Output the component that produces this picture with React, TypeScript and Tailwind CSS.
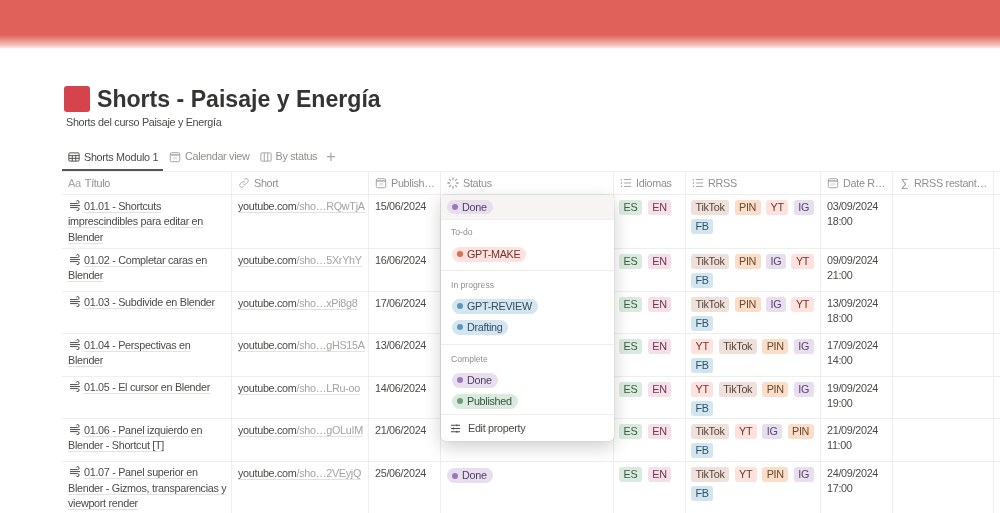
import React from "react";

const Wind = () => (
  <svg width="12" height="11" viewBox="0 0 12 11" fill="none" stroke="#4a4a4a" strokeWidth="1" className="inline-block mr-[3px] ml-[1px] align-[-1px]">
    <path d="M1 3.6h7.6a1.5 1.5 0 1 0-1.4-2.1" />
    <path d="M1 5.6h10" />
    <path d="M1 7.6h7.6a1.5 1.5 0 1 1-1.4 2.1" />
  </svg>
);

const Icon = ({ kind, color = "#a3a3a0", cls = "" }: { kind: string; color?: string; cls?: string }) => {
  const p = { width: 12, height: 12, viewBox: "0 0 14 14", fill: "none", stroke: color, strokeWidth: 1.1, className: "shrink-0 " + cls };
  if (kind === "cal")
    return (
      <svg {...p}>
        <rect x="1.5" y="2" width="11" height="10.5" rx="1.5" />
        <path d="M1.5 4.6h11" strokeWidth="1.6" />
        <rect x="4" y="7" width="6" height="3" fill={color} stroke="none" opacity=".25" />
      </svg>
    );
  if (kind === "link")
    return (
      <svg {...p}>
        <path d="M6 8a2.3 2.3 0 0 0 3.3 0l2-2a2.3 2.3 0 0 0-3.3-3.3l-.8.8" />
        <path d="M8 6a2.3 2.3 0 0 0-3.3 0l-2 2a2.3 2.3 0 0 0 3.3 3.3l.8-.8" />
      </svg>
    );
  if (kind === "list")
    return (
      <svg {...p}>
        <path d="M4.5 3h8.5M4.5 7h8.5M4.5 11h8.5" />
        <path d="M1 3h1.4M1 7h1.4M1 11h1.4" strokeWidth="1.5" />
      </svg>
    );
  if (kind === "status")
    return (
      <svg {...p} strokeWidth="1.5" strokeLinecap="round">
        <path d="M7 1v2M7 11v2M1 7h2M11 7h2M2.8 2.8l1.4 1.4M9.8 9.8l1.4 1.4M2.8 11.2l1.4-1.4M9.8 4.2l1.4-1.4" />
      </svg>
    );
  if (kind === "table")
    return (
      <svg {...p}>
        <rect x="1" y="2.2" width="12" height="9.6" rx="1.3" />
        <path d="M1 5.4h12M1 8.6h12M5 5.4v6.4M9 5.4v6.4" />
      </svg>
    );
  if (kind === "board")
    return (
      <svg {...p}>
        <rect x="1" y="2.2" width="12" height="9.6" rx="1.3" />
        <path d="M5 2.2v9.6M9 2.2v9.6" />
      </svg>
    );
  return null;
};

const tagColors: Record<string, string> = {
  ES: "bg-[#dbeadf] text-[#3d5c49]",
  EN: "bg-[#f5e0e9] text-[#6b3a52]",
  TikTok: "bg-[#eee0da] text-[#5a443a]",
  PIN: "bg-[#fadec9] text-[#6b4a2c]",
  YT: "bg-[#ffe2dd] text-[#6e3630]",
  IG: "bg-[#e8deee] text-[#54476e]",
  FB: "bg-[#d3e5ef] text-[#2f5368]",
};

const Tag = ({ t }: { t: string }) => (
  <span className={"h-[15px] leading-[15px] px-[4.5px] rounded-[3px] text-[10.8px] tracking-[-0.3px] " + tagColors[t]}>{t}</span>
);

const statusStyle: Record<string, [string, string]> = {
  Done: ["bg-[#e8deee] text-[#4e3f66]", "bg-[#9a78b8]"],
  "GPT-MAKE": ["bg-[#ffe2dd] text-[#6e3630]", "bg-[#df6b5a]"],
  "GPT-REVIEW": ["bg-[#d3e5ef] text-[#2f4f63]", "bg-[#5b97bd]"],
  Drafting: ["bg-[#d3e5ef] text-[#2f4f63]", "bg-[#5b97bd]"],
  Published: ["bg-[#dbeadf] text-[#34513f]", "bg-[#6c9b7d]"],
};

const Pill = ({ s }: { s: string }) => (
  <span className={"inline-flex items-center h-[14.5px] pl-[5px] pr-[6px] gap-[4px] rounded-full text-[10.8px] tracking-[-0.3px] leading-[15px] " + statusStyle[s][0]}>
    <span className={"w-[6px] h-[6px] rounded-full " + statusStyle[s][1]} />
    {s}
  </span>
);

const rows = [
  { title: "01.01 - Shortcuts imprescindibles para editar en Blender", end: "RQwTjA", date: "15/06/2024", r: ["TikTok", "PIN", "YT", "IG", "FB"], d: "03/09/2024", t: "18:00", h: "h-[54px]" },
  { title: "01.02 - Completar caras en Blender", end: "5XrYhY", date: "16/06/2024", r: ["TikTok", "PIN", "IG", "YT", "FB"], d: "09/09/2024", t: "21:00", h: "h-[42.5px]" },
  { title: "01.03 - Subdivide en Blender", end: "xPi8g8", date: "17/06/2024", r: ["TikTok", "PIN", "IG", "YT", "FB"], d: "13/09/2024", t: "18:00", h: "h-[42.5px]" },
  { title: "01.04 - Perspectivas en Blender", end: "gHS15A", date: "13/06/2024", r: ["YT", "TikTok", "PIN", "IG", "FB"], d: "17/09/2024", t: "14:00", h: "h-[42.5px]" },
  { title: "01.05 - El cursor en Blender", end: "LRu-oo", date: "14/06/2024", r: ["YT", "TikTok", "PIN", "IG", "FB"], d: "19/09/2024", t: "19:00", h: "h-[42.5px]" },
  { title: "01.06 - Panel izquierdo en Blender - Shortcut [T]", end: "gOLuIM", date: "21/06/2024", r: ["TikTok", "YT", "IG", "PIN", "FB"], d: "21/09/2024", t: "11:00", h: "h-[42.5px]" },
  { title: "01.07 - Panel superior en Blender - Gizmos, transparencias y viewport render", end: "2VEyjQ", date: "25/06/2024", r: ["TikTok", "YT", "PIN", "IG", "FB"], d: "24/09/2024", t: "17:00", h: "h-[54px]", done: true },
];

const cols = "grid grid-cols-[170px_137px_72px_173px_72px_135px_72px_101px_40px]";
const cell = "border-r border-[#eeeeec] px-[6px] min-w-0";

const HeadCell = ({ icon, label, sigma }: { icon?: string; label: string; sigma?: boolean }) => (
  <div className={cell + " flex items-center gap-[4px] text-[10.8px] tracking-[-0.3px] text-[#8f8f8c]"}>
    {sigma ? <span className="w-[12px] text-center text-[11px]">∑</span> : icon === "aa" ? <span className="text-[11px] text-[#a5a5a2]">Aa</span> : <Icon kind={icon!} />}
    <span className="whitespace-nowrap">{label}</span>
  </div>
);

const Row = ({ r }: { r: (typeof rows)[number] }) => (
  <div className={cols + " border-b border-[#eeeeec] overflow-hidden text-[10.8px] tracking-[-0.3px] text-[#4a4a47] " + r.h}>
    <div className={cell + " pt-[3.5px] leading-[15.5px] !pr-[4px]"}>
      <Wind />
      <span className="border-b border-[#e2e2e0]">{r.title}</span>
    </div>
    <div className={cell + " pt-[4px] leading-[15px] whitespace-nowrap"}>
      <span className="border-b border-[#e2e2e0]">
        youtube.com<span className="text-[#a3a3a0]">/sho…{r.end}</span>
      </span>
    </div>
    <div className={cell + " pt-[4px] leading-[15px]"}>{r.date}</div>
    <div className={cell + " pt-[5px]"}>{r.done && <Pill s="Done" />}</div>
    <div className={cell + " !pl-[5px] pt-[5px] flex gap-[6px] items-start"}>
      <Tag t="ES" />
      <Tag t="EN" />
    </div>
    <div className={cell + " !pl-[5px] !pr-[1px] pt-[5px] flex flex-wrap content-start gap-x-[5.5px] gap-y-[4px]"}>
      {r.r.map((t) => (
        <Tag key={t} t={t} />
      ))}
    </div>
    <div className={cell + " pt-[4px] leading-[15px]"}>
      {r.d}
      <br />
      {r.t}
    </div>
    <div className={cell} />
    <div />
  </div>
);

export default function App() {
  return (
    <div className="w-[1000px] h-[513px] overflow-hidden bg-white font-['Liberation_Sans',Arial,sans-serif] text-[#373735] blur-[0.3px]">
      <div className="h-[49px] bg-[linear-gradient(to_bottom,#e0615a_0,#e0615a_35px,#f5c9c5_46px,#ffffff_49px)]" />
      <div className="pl-[62px]">
        <div className="flex items-center h-[26px] mt-[37px] pl-[2px]">
          <div className="w-[26px] h-[26px] rounded-[3px] bg-[#d5434d] shrink-0" />
          <h1 className="ml-[7px] text-[23.1px] font-bold leading-[30px] text-[#343432]">Shorts - Paisaje y Energía</h1>
        </div>
        <p className="mt-[3px] ml-[4px] text-[10.8px] tracking-[-0.3px] leading-[15px] text-[#4a4a48]">Shorts del curso Paisaje y Energía</p>
        <div className="flex items-center h-[23px] mt-[15px] text-[10.8px] tracking-[-0.3px] text-[#8f8f8c] whitespace-nowrap">
          <div className="flex items-center gap-[4px] h-[26px] w-[101px] pl-[6px] border-b-2 border-[#55554f] text-[#4a4a48] mb-[-3px]">
            <Icon kind="table" color="#4a4a48" />
            Shorts Modulo 1
          </div>
          <div className="flex items-center gap-[4px] ml-[6px]">
            <Icon kind="cal" />
            Calendar view
          </div>
          <div className="flex items-center gap-[4px] ml-[10px]">
            <Icon kind="board" />
            By status
          </div>
          <span className="ml-[9px] text-[16px] text-[#a5a5a2] leading-[16px]">+</span>
        </div>
        <div className="relative mt-[3px] w-[978px]">
          <div className={cols + " h-[24px] border-t border-b border-[#eeeeec]"}>
            <HeadCell icon="aa" label="Título" />
            <HeadCell icon="link" label="Short" />
            <HeadCell icon="cal" label="Publish…" />
            <HeadCell icon="status" label="Status" />
            <HeadCell icon="list" label="Idiomas" />
            <HeadCell icon="list" label="RRSS" />
            <HeadCell icon="cal" label="Date R…" />
            <HeadCell sigma label="RRSS restant…" />
            <div />
          </div>
          {rows.map((r) => (
            <Row key={r.end} r={r} />
          ))}

          <div className="absolute left-[379px] top-[24px] w-[173px] h-[246px] bg-white rounded-[5px] shadow-[0_6px_18px_rgba(15,15,15,0.2),0_0_0_1px_rgba(15,15,15,0.04)] flex flex-col text-[10.8px] tracking-[-0.3px] overflow-hidden">
            <div className="h-[25px] bg-[#f6f5f3] flex items-center pl-[6px] border-b border-[#eeeeec]">
              <Pill s="Done" />
            </div>
            <div className="h-[51px] border-b border-[#eeeeec] pl-[10px] pt-[6px]">
              <div className="text-[8.6px] tracking-normal leading-[12px] text-[#8f8f8c]">To-do</div>
              <div className="mt-[9px] ml-[1px] flex">
                <Pill s="GPT-MAKE" />
              </div>
            </div>
            <div className="h-[74px] border-b border-[#eeeeec] pl-[10px] pt-[8px]">
              <div className="text-[8.6px] tracking-normal leading-[12px] text-[#8f8f8c]">In progress</div>
              <div className="mt-[8px] ml-[1px] flex flex-col items-start gap-[6.5px]">
                <Pill s="GPT-REVIEW" />
                <Pill s="Drafting" />
              </div>
            </div>
            <div className="h-[70px] border-b border-[#eeeeec] pl-[10px] pt-[8px]">
              <div className="text-[8.6px] tracking-normal leading-[12px] text-[#8f8f8c]">Complete</div>
              <div className="mt-[8px] ml-[1px] flex flex-col items-start gap-[6.5px]">
                <Pill s="Done" />
                <Pill s="Published" />
              </div>
            </div>
            <div className="flex items-center h-[26px] pl-[9px] gap-[7px] text-[#4a4a48]">
              <svg width="11" height="11" viewBox="0 0 12 12" fill="none" stroke="#4a4a48" strokeWidth="1.1">
                <path d="M1 2.5h10M1 6h10M1 9.5h10" />
                <path d="M7.5 1.5v2M4 5v2M7.5 8.5v2" />
              </svg>
              Edit property
            </div>
          </div>
        </div>
      </div>
    </div>
  );
}
